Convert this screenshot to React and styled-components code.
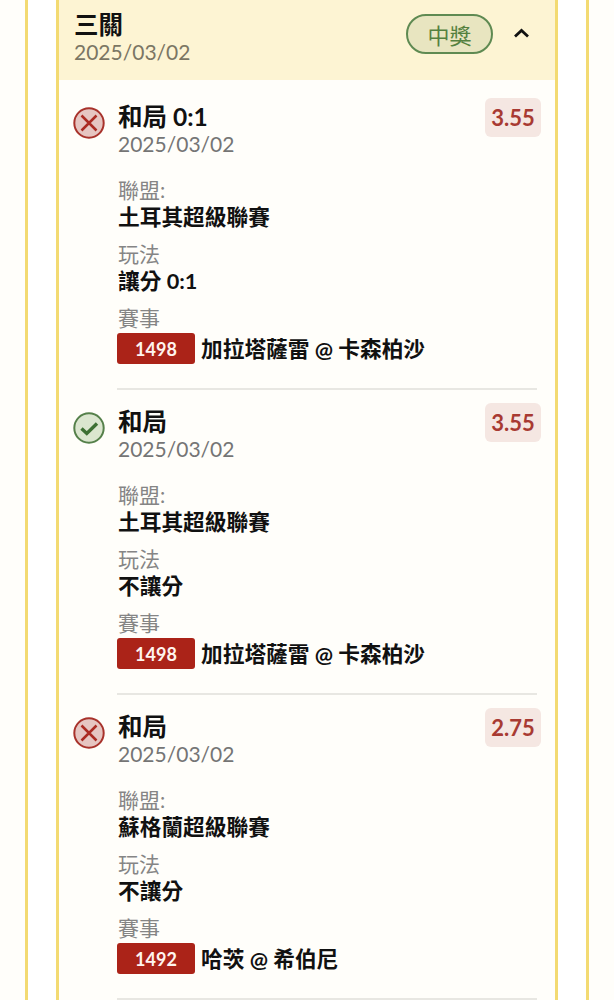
import React from 'react';
import styled, {createGlobalStyle} from 'styled-components';

const GlobalStyle = createGlobalStyle`
    html, body {
        margin: 0;
        padding: 0;
        background: #fffefa;
    }
    body {
        font-family: Lato, "Noto Sans CJK TC", sans-serif;
        color: #111;
    }
`;

const Page = styled.div`
        height: 1000px;
        overflow: hidden;
        padding: 0 25px;
        box-sizing: border-box;
    `,
    Outer = styled.div`
        height: 100%;
        padding: 0 28px;
        background: #fff;
        border-left: 3px solid #f3da72;
        border-right: 3px solid #f3da72;
    `,
    Card = styled.div`
        height: 100%;
        background: #fffefa;
        border-left: 3px solid #f3da72;
        border-right: 3px solid #f3da72;
    `,
    Header = styled.div`
        height: 80px;
        box-sizing: border-box;
        padding: 11px 0 0 15px;
        display: flex;
        background: #fdf4d3;
    `,
    HeaderText = styled.div`
        flex: 1;
    `,
    Title = styled.div`
        font-size: 24.5px;
        font-weight: 700;
        line-height: 28px;
    `,
    DateText = styled.div`
        font-size: 21px;
        line-height: 25px;
        color: ${(p) => p.$color || '#757575'};
    `,
    Status = styled.div`
        width: 83px;
        height: 36px;
        margin: 3px 20px 0 0;
        border: 2px solid #5f8a52;
        border-radius: 20px;
        background: #e8e5c0;
        color: #55813f;
        font-size: 22px;
        display: flex;
        align-items: center;
        justify-content: center;
    `,
    Chevron = styled.svg`
        width: 17px;
        height: 10px;
        margin: 17px 25px 0 0;
    `,
    List = styled.div`
        padding: 5px 18px 0 14px;
    `,
    Item = styled.div`
        display: flex;
        gap: 13px;
        height: 305px;
        box-sizing: border-box;
        padding-top: 18px;
    `,
    ResultIcon = styled.svg`
        width: 32px;
        height: 32px;
        margin-top: 4px;
        flex: none;
    `,
    Body = styled.div`
        flex: 1;
        height: 287px;
        box-sizing: border-box;
        border-bottom: 2px solid #e8e7e2;
        margin-left: -1px;
        padding-left: 1px;
    `,
    ItemHead = styled.div`
        display: flex;
        justify-content: space-between;
        margin-right: -4px;
    `,
    Odds = styled.div`
        width: 56px;
        height: 39px;
        margin-top: -5px;
        border-radius: 6px;
        background: #f5e7e2;
        color: #a83a32;
        font-size: 22px;
        font-weight: 700;
        display: flex;
        align-items: center;
        justify-content: center;
    `,
    Field = styled.div`
        margin-top: ${(p) => p.$top || 10}px;
    `,
    Label = styled.div`
        font-size: 21px;
        line-height: 26px;
        color: #858585;
    `,
    Value = styled.div`
        font-size: 21.7px;
        line-height: 28px;
        font-weight: 700;
        display: flex;
        align-items: center;
        gap: 6px;
    `,
    MatchNo = styled.span`
        width: 78px;
        height: 31px;
        margin: 2px 0 0 -1px;
        border-radius: 3px;
        background: #ab2318;
        color: #fff4ee;
        font-size: 18px;
        font-weight: 700;
        display: flex;
        align-items: center;
        justify-content: center;
    `,
    MatchName = styled.span`
        margin-top: 3px;
    `;

const bets = [
    {won: false, name: '和局 0:1', odds: '3.55', league: '土耳其超級聯賽', play: '讓分 0:1', no: '1498', match: '加拉塔薩雷 @ 卡森柏沙'},
    {won: true, name: '和局', odds: '3.55', league: '土耳其超級聯賽', play: '不讓分', no: '1498', match: '加拉塔薩雷 @ 卡森柏沙'},
    {won: false, name: '和局', odds: '2.75', league: '蘇格蘭超級聯賽', play: '不讓分', no: '1492', match: '哈茨 @ 希伯尼'}
];

function LostIcon() {
    return (
        <ResultIcon viewBox="0 0 32 32">
            <circle cx="16" cy="16" r="14.7" fill="#e6c5c1" stroke="#a8322b" strokeWidth="2" />
            <path d="M8.5 8.5 L23.5 23.5 M23.5 8.5 L8.5 23.5" stroke="#ab2a22" strokeWidth="2.5" fill="none" />
        </ResultIcon>
    );
}

function WonIcon() {
    return (
        <ResultIcon viewBox="0 0 32 32">
            <circle cx="16" cy="16" r="14.7" fill="#dbe6cf" stroke="#55804a" strokeWidth="2" />
            <path d="M8.5 16.5 L13.8 21.5 L24 11.5" stroke="#3d7033" strokeWidth="3.4" fill="none" />
        </ResultIcon>
    );
}

function App() {
    return (
        <Page>
            <GlobalStyle />
            <Outer>
                <Card>
                    <Header>
                        <HeaderText>
                            <Title>三關</Title>
                            <DateText $color="#7b7664">2025/03/02</DateText>
                        </HeaderText>
                        <Status>中獎</Status>
                        <Chevron viewBox="0 0 17 10">
                            <path d="M2 8.5 L8.5 2.5 L15 8.5" stroke="#111" strokeWidth="2.8" fill="none" />
                        </Chevron>
                    </Header>
                    <List>
                        {bets.map((bet, i) => (
                            <Item key={i}>
                                {bet.won ? <WonIcon /> : <LostIcon />}
                                <Body>
                                    <ItemHead>
                                        <div>
                                            <Title>{bet.name}</Title>
                                            <DateText>2025/03/02</DateText>
                                        </div>
                                        <Odds>{bet.odds}</Odds>
                                    </ItemHead>
                                    <Field $top={21}>
                                        <Label>聯盟:</Label>
                                        <Value>{bet.league}</Value>
                                    </Field>
                                    <Field>
                                        <Label>玩法</Label>
                                        <Value>{bet.play}</Value>
                                    </Field>
                                    <Field>
                                        <Label>賽事</Label>
                                        <Value>
                                            <MatchNo>{bet.no}</MatchNo>
                                            <MatchName>{bet.match}</MatchName>
                                        </Value>
                                    </Field>
                                </Body>
                            </Item>
                        ))}
                    </List>
                </Card>
            </Outer>
        </Page>
    );
}

export default App;
